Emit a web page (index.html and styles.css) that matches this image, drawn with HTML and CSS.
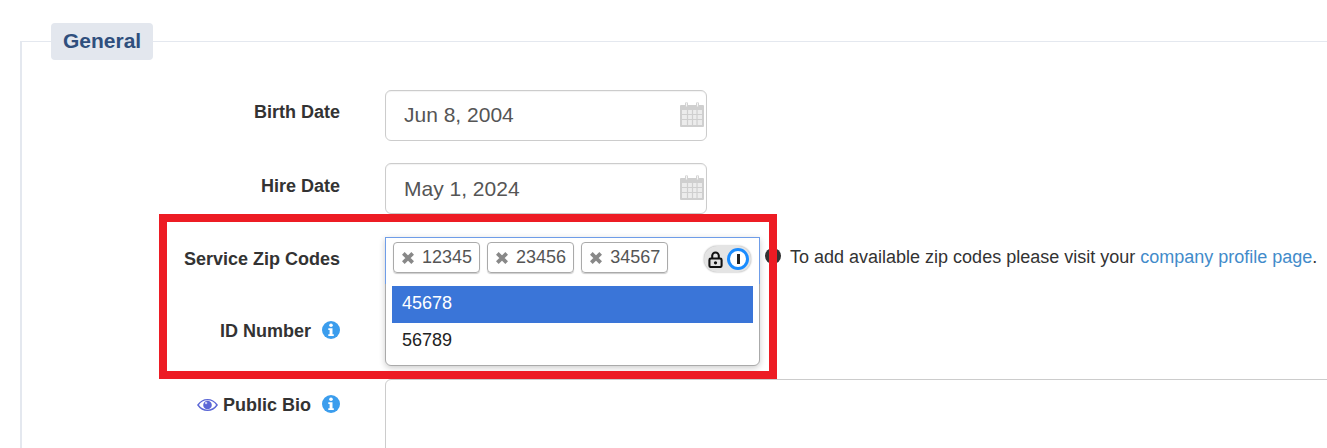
FILE: index.html
```html
<!DOCTYPE html>
<html lang="en">

<head>
    <meta charset="UTF-8">
    <meta name="viewport" content="width=device-width, initial-scale=1.0">
    <title>General</title>
    <link rel="stylesheet" href="styles.css">
</head>

<body>
    <fieldset class="section">
        <legend class="section-title">General</legend>

        <div class="row row-birth">
            <label class="row-label">Birth Date</label>
            <div class="date-field">
                <input class="text-input" type="text" value="Jun 8, 2004">
                <svg class="calendar" viewBox="0 0 24 26"><use href="#cal"></use></svg>
            </div>
        </div>

        <div class="row row-hire">
            <label class="row-label">Hire Date</label>
            <div class="date-field">
                <input class="text-input" type="text" value="May 1, 2024">
                <svg class="calendar" viewBox="0 0 24 26"><use href="#cal"></use></svg>
            </div>
        </div>

        <div class="row row-zip">
            <label class="row-label">Service Zip Codes</label>
            <div class="zip-field">
                <div class="select-box">
                    <div class="select-top">
                        <span class="chip"><svg class="chip-x" viewBox="0 0 12 12"><use href="#cross"></use></svg>12345</span>
                        <span class="chip"><svg class="chip-x" viewBox="0 0 12 12"><use href="#cross"></use></svg>23456</span>
                        <span class="chip"><svg class="chip-x" viewBox="0 0 12 12"><use href="#cross"></use></svg>34567</span>
                        <span class="pw-pill">
                            <svg class="pw-lock" viewBox="0 0 16 18" width="15" height="17">
                                <path d="M4.500 8V5a3.500 3.500 0 0 1 7 0v3" fill="none" stroke="#111" stroke-width="2.200"/>
                                <rect x="1.500" y="8" width="13" height="9" rx="1.500" fill="none" stroke="#111" stroke-width="2.200"/>
                                <circle cx="8" cy="12.500" r="1.700" fill="#111"/>
                            </svg>
                            <span class="pw-ring"><span class="pw-bar"></span></span>
                        </span>
                    </div>
                    <ul class="options">
                        <li class="option option-active">45678</li>
                        <li class="option">56789</li>
                    </ul>
                </div>
            </div>
            <div class="help">
                <span class="help-dot"></span>
                <span>To add available zip codes please visit your <a class="help-link" href="#">company profile page</a>.</span>
            </div>
        </div>

        <div class="row row-id">
            <label class="row-label">ID Number
                <svg class="info" viewBox="0 0 18 18"><use href="#info"></use></svg>
            </label>
        </div>

        <div class="row row-bio">
            <label class="row-label">
                <svg class="eye" viewBox="0 0 22 14" width="21" height="14">
                    <path d="M1 7c2.500-3.600 5.800-5.600 10-5.600S18.500 3.400 21 7c-2.500 3.600-5.800 5.600-10 5.600S3.500 10.600 1 7z" fill="none" stroke="#5b67d6" stroke-width="1.500"/>
                    <circle cx="11" cy="7" r="4.500" fill="#5b67d6"/>
                    <circle cx="9.500" cy="5" r="1.300" fill="#c5caf2"/>
                </svg>
                Public Bio
                <svg class="info" viewBox="0 0 18 18"><use href="#info"></use></svg>
            </label>
            <textarea class="bio-input"></textarea>
        </div>
    </fieldset>

    <div class="highlight"></div>

    <svg class="defs" width="0" height="0">
        <symbol id="cal" viewBox="0 0 24 26">
            <path d="M1 4h4V2.500a1.500 1.500 0 0 1 3 0V4h8V2.500a1.500 1.500 0 0 1 3 0V4h4a1 1 0 0 1 1 1v20a1 1 0 0 1-1 1H1a1 1 0 0 1-1-1V5a1 1 0 0 1 1-1z" fill="#cfcfcf"/>
            <path d="M2 9h20v15H2z" fill="#ececec"/>
            <path d="M2 13.500h20M2 18.500h20M7.500 9v15M12.500 9v15M17 9v15" stroke="#cfcfcf" stroke-width="1.200"/>
            <path d="M6.500 1.500v4M17.500 1.500v4" stroke="#f4f4f4" stroke-width="1.200"/>
        </symbol>
        <symbol id="info" viewBox="0 0 18 18">
            <circle cx="9" cy="9" r="9" fill="#3b9ded"/>
            <circle cx="9" cy="4.300" r="1.800" fill="#fff"/>
            <path d="M6.300 7.300h4.200v6h1.300v1.700H6.300v-1.700h1.300V9H6.300z" fill="#fff"/>
        </symbol>
        <symbol id="cross" viewBox="0 0 12 12">
            <path d="M2 2l8 8M10 2l-8 8" stroke="#888" stroke-width="3.200" fill="none"/>
        </symbol>
    </svg>
</body>

</html>
```
FILE: styles.css
```css
html, body {
    overflow: hidden;
}

body {
    font-family: "Liberation Sans", Arial, sans-serif;
    margin: 0;
    height: 448px;
    position: relative;
    background-color: #fff;
    color: #333;
}

.section {
    width: 1500px;
    height: 600px;
    margin: 23px 0 0 20px;
    padding: 30px 0 0 0;
    border: 1px solid #e4e8ef;
    border-left-width: 2px;
    box-sizing: border-box;
}

.section-title {
    margin-left: 29px;
    padding: 0 12px;
    height: 37px;
    line-height: 36px;
    box-sizing: border-box;
    background-color: #e3e7ee;
    border-radius: 4px;
    color: #2f4f7d;
    font-size: 21px;
    font-weight: bold;
}

.row {
    display: grid;
    grid-template-columns: 318px 322px;
    column-gap: 45px;
    height: 51px;
    margin-bottom: 22px;
}

.row-zip {
    display: flex;
    gap: 0;
    height: 50px;
    margin-top: 1px;
}

.row-zip .row-label {
    width: 318px;
    margin-right: 45px;
    flex: none;
    box-sizing: border-box;
}

.row-id {
    height: 49px;
}

.row-bio {
    grid-template-columns: 318px 1fr;
    height: 150px;
}

.row-label {
    display: flex;
    justify-content: flex-end;
    align-items: flex-start;
    padding-top: 12px;
    font-size: 18px;
    line-height: 20px;
    font-weight: bold;
    color: #333;
}

.row-hire .row-label {
    padding-top: 13px;
}

.row-zip .row-label,
.row-id .row-label {
    padding-top: 13px;
}

.row-bio .row-label {
    padding-top: 16px;
}

.date-field {
    position: relative;
}

.text-input {
    width: 100%;
    height: 51px;
    box-sizing: border-box;
    padding: 0 18px;
    border: 1px solid #ccc;
    border-radius: 6px;
    font-family: inherit;
    font-size: 21px;
    color: #555;
    box-shadow: inset 0 1px 1px rgba(0, 0, 0, 0.05);
}

.row-birth .text-input {
    padding-bottom: 2px;
}

.calendar {
    position: absolute;
    top: 11px;
    right: 3px;
    width: 24px;
    height: 26px;
}

.zip-field {
    position: relative;
    width: 380px;
    flex: none;
}

.select-box {
    position: absolute;
    top: 1px;
    left: 0;
    width: 375px;
    height: 129px;
    box-sizing: border-box;
    border: 1px solid #aaa;
    border-radius: 0 0 6px 6px;
    background-color: #fff;
    box-shadow: 0 2px 6px rgba(0, 0, 0, 0.2);
    padding: 0 6px;
    z-index: 2;
}

.select-top {
    display: flex;
    align-items: flex-start;
    gap: 7px;
    height: 42px;
    margin: 0 -7px;
    padding: 4px 7px 0;
    border: 1px solid #6f9de8;
    border-bottom: none;
    position: relative;
    top: -1px;
}

.chip {
    display: flex;
    align-items: center;
    height: 31px;
    box-sizing: border-box;
    padding: 0 7px 0 7px;
    border: 1px solid #aaa;
    border-radius: 4px;
    box-shadow: 0 1px 1px rgba(0, 0, 0, 0.2);
    font-size: 18px;
    color: #555;
}

.chip-x {
    width: 14px;
    height: 14px;
    margin: 1px 7px 0 0;
}

.pw-pill {
    position: absolute;
    top: 8px;
    right: 8px;
    width: 47px;
    height: 26px;
    box-sizing: border-box;
    display: flex;
    align-items: center;
    justify-content: space-between;
    padding: 0 2px 0 4px;
    border-radius: 13px;
    background-color: #e4e4e4;
    box-shadow: 0 0 2px rgba(0, 0, 0, 0.4);
}

.pw-ring {
    width: 22px;
    height: 22px;
    box-sizing: border-box;
    border: 3px solid #1a8cff;
    border-radius: 50%;
    background-color: #fff;
    display: flex;
    align-items: center;
    justify-content: center;
}

.pw-bar {
    width: 3px;
    height: 10px;
    background-color: #222;
}

.options {
    list-style: none;
    margin: 1px 0 0;
    padding: 0;
}

.option {
    height: 37px;
    line-height: 34px;
    padding-left: 10px;
    font-size: 18px;
    color: #222;
}

.option-active {
    background-color: #3a75d8;
    color: #fff;
}

.help {
    display: flex;
    align-items: flex-start;
    gap: 9px;
    height: 40px;
    padding-top: 11px;
    font-size: 18px;
    line-height: 20px;
    color: #333;
}

.help-dot {
    width: 16px;
    height: 16px;
    margin-top: 1px;
    flex: none;
    border-radius: 50%;
    background-color: #333;
}

.help-link {
    color: #428bca;
    text-decoration: none;
}

.info {
    width: 18px;
    height: 18px;
    margin-left: 11px;
    flex: none;
}

.eye {
    margin-right: 5px;
    margin-top: 3px;
    flex: none;
}

.bio-input {
    width: 1100px;
    height: 150px;
    box-sizing: border-box;
    border: 1px solid #ccc;
    border-radius: 6px;
}

.highlight {
    position: absolute;
    left: 159px;
    top: 214px;
    width: 618px;
    height: 165px;
    box-sizing: border-box;
    border: 8px solid #ed1c24;
    z-index: 3;
}

.defs {
    position: absolute;
}
```
